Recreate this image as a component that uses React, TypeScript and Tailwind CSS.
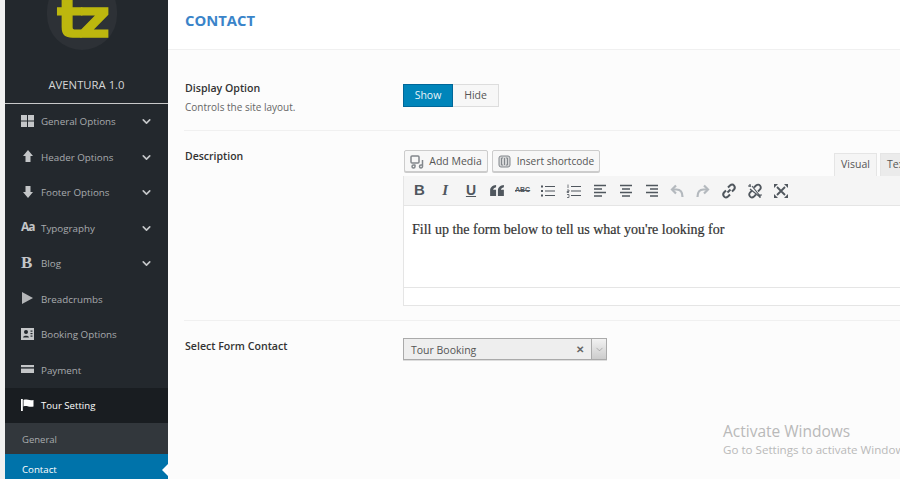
import React from 'react'
import { ChevronDown } from 'lucide-react'

const sans = "font-['Open_Sans',sans-serif]"

const GridIcon = () => (
  <svg width="13" height="12" viewBox="0 0 13 12" fill="#c4c6c8">
    <rect x="0" y="0" width="6" height="5.5" />
    <rect x="7" y="0" width="6" height="5.5" />
    <rect x="0" y="6.5" width="6" height="5.5" />
    <rect x="7" y="6.5" width="6" height="5.5" />
  </svg>
)
const UpIcon = () => (
  <svg width="10" height="12" viewBox="0 0 10 12" fill="#c4c6c8" className="ml-[2px]">
    <path d="M5 0l5 6H7.500v6h-5V6H0z" />
  </svg>
)
const DownIcon = () => (
  <svg width="10" height="12" viewBox="0 0 10 12" fill="#c4c6c8" className="ml-[2px]">
    <path d="M5 12L0 6h2.500V0h5v6H10z" />
  </svg>
)
const PlayIcon = () => (
  <svg width="11" height="12" viewBox="0 0 11 12" fill="#b4b6b8" className="ml-[1px]">
    <path d="M0 0l11 6-11 6z" />
  </svg>
)
const CardIcon = () => (
  <svg width="13" height="12" viewBox="0 0 13 12">
    <rect width="13" height="12" fill="#c4c6c8" />
    <circle cx="5" cy="4" r="2" fill="#23282d" />
    <path d="M2 9.500c0-2.500 6-2.500 6 0z" fill="#23282d" />
    <rect x="9.500" y="2.500" width="2" height="1.200" fill="#23282d" />
    <rect x="9.500" y="5" width="2" height="1.200" fill="#23282d" />
    <rect x="9.500" y="7.500" width="2" height="1.200" fill="#23282d" />
  </svg>
)
const PayIcon = () => (
  <svg width="13" height="8" viewBox="0 0 13 8" fill="#c4c6c8">
    <rect width="13" height="2.200" />
    <rect y="3.600" width="13" height="4.400" />
  </svg>
)
const FlagIcon = () => (
  <svg width="13" height="12" viewBox="0 0 13 12" fill="#ffffff">
    <rect x="0" y="0" width="1.800" height="12" />
    <path d="M2.500 1c3-1.500 5 1 10 0v6.500c-4 1.200-7-1.500-10 0z" />
  </svg>
)

const menu = [
  { label: 'General Options', icon: <GridIcon />, arrow: true },
  { label: 'Header Options', icon: <UpIcon />, arrow: true },
  { label: 'Footer Options', icon: <DownIcon />, arrow: true },
  { label: 'Typography', icon: <span className="text-[12px] font-bold text-[#c4c6c8] tracking-[-1px]">Aa</span>, arrow: true },
  { label: 'Blog', icon: <span className="font-['Liberation_Serif',serif] text-[17px] font-bold text-[#c4c6c8]">B</span>, arrow: true },
  { label: 'Breadcrumbs', icon: <PlayIcon />, arrow: false },
  { label: 'Booking Options', icon: <CardIcon />, arrow: false },
  { label: 'Payment', icon: <PayIcon />, arrow: false },
]

const Stroke = ({ children, color = '#50575e' }: { children: React.ReactNode; color?: string }) => (
  <svg width="16" height="16" viewBox="0 0 16 16" fill="none" stroke={color} strokeWidth="1.600">
    {children}
  </svg>
)

const toolbar: React.ReactNode[] = [
  <span className="text-[15px] font-bold font-['Liberation_Sans',sans-serif] text-[#50575e]">B</span>,
  <span className="text-[15px] font-bold italic font-['Liberation_Serif',serif] text-[#50575e]">I</span>,
  <span className="text-[14px] font-bold underline font-['Liberation_Sans',sans-serif] text-[#50575e]">U</span>,
  <svg width="14" height="11" viewBox="0 0 15 12" fill="#50575e">
    <path d="M6.500 0v2.500C4.500 3 3.500 4 3.300 5.200H6.500V12H0V6C0 2.500 2.500.4 6.500 0zM15 0v2.500c-2 .5-3 1.500-3.200 2.700H15V12H8.500V6C8.500 2.500 11 .4 15 0z" />
  </svg>,
  <span className="text-[7px] font-bold line-through text-[#50575e] font-['Liberation_Sans',sans-serif]">ABC</span>,
  <Stroke>
    <path d="M5 3.500h10M5 8h10M5 12.500h10" strokeWidth="1.200" />
    <path d="M1 3.500h2M1 8h2M1 12.500h2" strokeWidth="2" />
  </Stroke>,
  <Stroke>
    <path d="M5 3.500h10M5 8h10M5 12.500h10" strokeWidth="1.200" />
    <path d="M2 1.500v3.500M1 7h2v1.500H1v1h2M1 11.500h2v3H1" strokeWidth="0.800" />
  </Stroke>,
  <Stroke>
    <path d="M2 2.500h12M2 6h8M2 9.500h12M2 13h8" />
  </Stroke>,
  <Stroke>
    <path d="M2 2.500h12M4 6h8M2 9.500h12M4 13h8" />
  </Stroke>,
  <Stroke>
    <path d="M2 2.500h12M6 6h8M2 9.500h12M6 13h8" />
  </Stroke>,
  <svg width="16" height="16" viewBox="0 0 16 16" fill="none" stroke="#b4b9be" strokeWidth="2.200">
    <path d="M13.500 14c0-5-2-7.500-6-7.500H3.500" />
    <path d="M7 2.500L3 6.500l4 4" />
  </svg>,
  <svg width="16" height="16" viewBox="0 0 16 16" fill="none" stroke="#b4b9be" strokeWidth="2.200">
    <path d="M2.500 14c0-5 2-7.500 6-7.500h4" />
    <path d="M9 2.500l4 4-4 4" />
  </svg>,
  <svg width="16" height="16" viewBox="0 0 16 16" fill="none" stroke="#50575e" strokeWidth="2">
    <path d="M6.500 9.500L9.500 6.500" />
    <path d="M7 4.500l2-2c1.500-1.300 3-1.300 4 0s1.300 2.500 0 4l-2 2" />
    <path d="M9 11.500l-2 2c-1.500 1.300-3 1.300-4 0s-1.300-2.500 0-4l2-2" />
  </svg>,
  <svg width="16" height="16" viewBox="0 0 16 16" fill="none" stroke="#50575e" strokeWidth="1.800">
    <path d="M5 3l8 10M3 6l10 8" strokeWidth="1.200" />
    <path d="M7 4.500l2-2c1.500-1.300 3-1.300 4 0s1.300 2.500 0 4l-2 2" />
    <path d="M9 11.500l-2 2c-1.500 1.300-3 1.300-4 0s-1.300-2.500 0-4l2-2" />
    <path d="M1 3h3M3 1v3M12 12h3M13 15v-3" strokeWidth="1.200" />
  </svg>,
  <svg width="16" height="16" viewBox="0 0 16 16" fill="none" stroke="#50575e" strokeWidth="1.800">
    <path d="M4 4l8 8M12 4l-8 8" />
    <path d="M1 1h4L1 5zM15 1v4l-4-4zM15 15h-4l4-4zM1 15v-4l4 4z" fill="#50575e" stroke="none" />
  </svg>,
]

const App: React.FC = () => {
  return (
    <div className={`relative flex h-[479px] w-[900px] overflow-hidden bg-white ${sans}`}>
      <div className="w-[5px] shrink-0 bg-[#f1f1f1]" />

      {/* Sidebar */}
      <div className="flex w-[163px] shrink-0 flex-col bg-[#23282d]">
        <div className="flex h-[104px] shrink-0 flex-col items-center border-b border-[#c8c9ca]">
          <div className="mt-[-24px] ml-[-10px] flex h-[74px] w-[70px] shrink-0 items-end justify-center rounded-full bg-[#2d3136]">
            <span className="mb-[3px] font-['DejaVu_Sans',sans-serif] text-[54px] leading-[56px] font-bold tracking-[-4px] text-[#bdb70e] [-webkit-text-stroke:1.500px_#bdb70e]">tz</span>
          </div>
          <div className="mt-[27px] text-[11.300px] leading-[16px] text-[#d5d6d7]">AVENTURA 1.0</div>
        </div>

        {menu.map((item) => (
          <div key={item.label} className="flex h-[35.500px] shrink-0 items-center pl-[16px] pr-[15px] pt-[2px]">
            <div className="mt-[-4px] flex w-[20px] shrink-0 justify-start">{item.icon}</div>
            <span className="text-[9.800px] text-[#a8abae]">{item.label}</span>
            {item.arrow && <ChevronDown size={13} strokeWidth={3} className="ml-auto mt-[-2px] text-[#c4c6c8]" />}
          </div>
        ))}

        <div className="flex h-[35px] shrink-0 items-center bg-[#191d21] pl-[16px] pt-[2px]">
          <div className="mt-[-4px] flex w-[20px] shrink-0"><FlagIcon /></div>
          <span className="text-[9.600px] font-medium text-white">Tour Setting</span>
        </div>
        <div className="flex h-[31px] shrink-0 items-center bg-[#32373c] pl-[17px] pt-[3px] text-[9.500px] text-[#a8abae]">General</div>
        <div className="relative flex h-[31px] shrink-0 items-center bg-[#0073aa] pl-[17px] pt-[2px] text-[9.700px] text-white">
          Contact
          <div className="absolute right-0 top-[10px] h-0 w-0 border-y-[6px] border-r-[6px] border-y-transparent border-r-white" />
        </div>
      </div>

      {/* Main panel */}
      <div className="min-w-0 flex-1 bg-[#fcfcfc]">
        <div className="flex h-[50px] items-start border-b border-[#f0f0f0] bg-white pl-[17px] pt-[10px]">
          <h1 className="text-[14.800px] leading-[20px] font-bold text-[#3a84c9]">CONTACT</h1>
        </div>

        <div className="ml-[16px] flex h-[81px] border-b border-[#f0f0f0] pt-[30px]">
          <div className="w-[219px] shrink-0 pl-[1px]">
            <div className="text-[10.600px] leading-[16px] font-semibold text-[#333]">Display Option</div>
            <div className="mt-[4px] text-[10px] leading-[14px] text-[#666]">Controls the site layout.</div>
          </div>
          <div className="mt-[4px] flex h-[23px] text-[10.500px]">
            <div className="flex w-[50px] items-center justify-center border border-[#006799] bg-[#0085ba] text-[#e8f3f8]">Show</div>
            <div className="flex w-[46px] items-center justify-center border border-l-0 border-[#ddd] bg-[#f7f7f7] text-[#555]">Hide</div>
          </div>
        </div>

        <div className="ml-[16px] flex h-[190px] border-b border-[#f0f0f0] pt-[19px]">
          <div className="w-[219px] shrink-0 pl-[1px] text-[10.500px] leading-[12px] font-semibold text-[#333]">Description</div>
          <div className="min-w-0 flex-1">
            <div className="flex h-[26px] items-start pl-[1px]">
              <div className="flex h-[22px] w-[84px] shrink-0 items-center justify-center gap-[4px] rounded-[2px] border border-[#ccc] bg-[#f7f7f7] pt-[1px] text-[10.500px] text-[#555] shadow-[0_1px_0_#ccc]">
                <svg width="15" height="14" viewBox="0 0 15 14" fill="none" stroke="#82878c" strokeWidth="1.500">
                  <rect x="1" y="1" width="8" height="7" rx="1" />
                  <path d="M12.500 5v6.500a1.500 1.500 0 1 1-1.500-1.500h1.500M5 9.500v2a1.500 1.500 0 1 1-1.500-1.500H5" />
                </svg>
                Add Media
              </div>
              <div className="ml-[4px] flex h-[22px] w-[108px] shrink-0 items-center justify-center gap-[6px] rounded-[2px] border border-[#ccc] bg-[#f7f7f7] pt-[1px] text-[10.100px] text-[#555] shadow-[0_1px_0_#ccc]">
                <svg width="13" height="13" viewBox="0 0 13 13" fill="none" stroke="#82878c" strokeWidth="1">
                  <rect x="1" y="1" width="11" height="11" rx="2" fill="#d5d6d7" />
                  <path d="M5 3H3.500v7H5M8 3h1.500v7H8M6.500 3v7" />
                </svg>
                Insert shortcode
              </div>
              <div className="ml-[234px] flex h-[26px] shrink-0 items-end self-start pt-[3px]">
                <div className="flex h-[23px] w-[43px] shrink-0 items-center justify-center border border-b-0 border-[#e5e5e5] bg-[#f5f5f5] text-[10.500px] text-[#555]">Visual</div>
                <div className="ml-[3px] flex h-[23px] w-[30px] shrink-0 items-center border border-b-0 border-[#e5e5e5] bg-[#ebebeb] pl-[6px] text-[10.500px] text-[#555]">Text</div>
              </div>
            </div>

            <div className="border-b border-l border-[#e5e5e5]">
              <div className="flex h-[30px] items-center border-b border-[#e5e5e5] bg-[#f5f5f5] pl-[2.500px]">
                {toolbar.map((icon, i) => (
                  <div key={i} className="flex w-[25.800px] shrink-0 items-center justify-center">{icon}</div>
                ))}
              </div>
              <div className="h-[81px] bg-white pl-[8px] pt-[14px] font-['Liberation_Serif',serif] text-[14px] leading-[20px] text-[#333] [-webkit-text-stroke:0.200px_#333]">
                Fill up the form below to tell us what you're looking for
              </div>
              <div className="h-[18px] border-t border-[#e5e5e5] bg-white" />
            </div>
          </div>
        </div>

        <div className="ml-[16px] flex pt-[16px]">
          <div className="w-[219px] shrink-0 pl-[1px] text-[10.600px] leading-[18px] font-semibold text-[#333]">Select Form Contact</div>
          <div className="mt-[1px] flex h-[22px] w-[204px] border border-[#aaa] bg-[#eeeeee] shadow-[0_1px_0_#ddd]">
            <span className="flex-1 self-center pl-[7px] pt-[3px] text-[10.500px] text-[#555]">Tour Booking</span>
            <span className="self-center pr-[7px] pt-[1px] text-[10px] font-bold text-[#666]">✕</span>
            <div className="flex w-[15px] items-center justify-center border-l border-[#aaa] bg-gradient-to-b from-[#f2f2f2] to-[#cccccc]">
              <ChevronDown size={11} strokeWidth={1} className="text-[#777]" />
            </div>
          </div>
        </div>
      </div>

      {/* Watermark */}
      <div className="absolute left-[723px] top-[421px] whitespace-nowrap text-[#b9b9b9]">
        <div className="text-[15.500px] leading-[20px]">Activate Windows</div>
        <div className="text-[11.600px] leading-[17px]">Go to Settings to activate Windows.</div>
      </div>
    </div>
  )
}

export default App
